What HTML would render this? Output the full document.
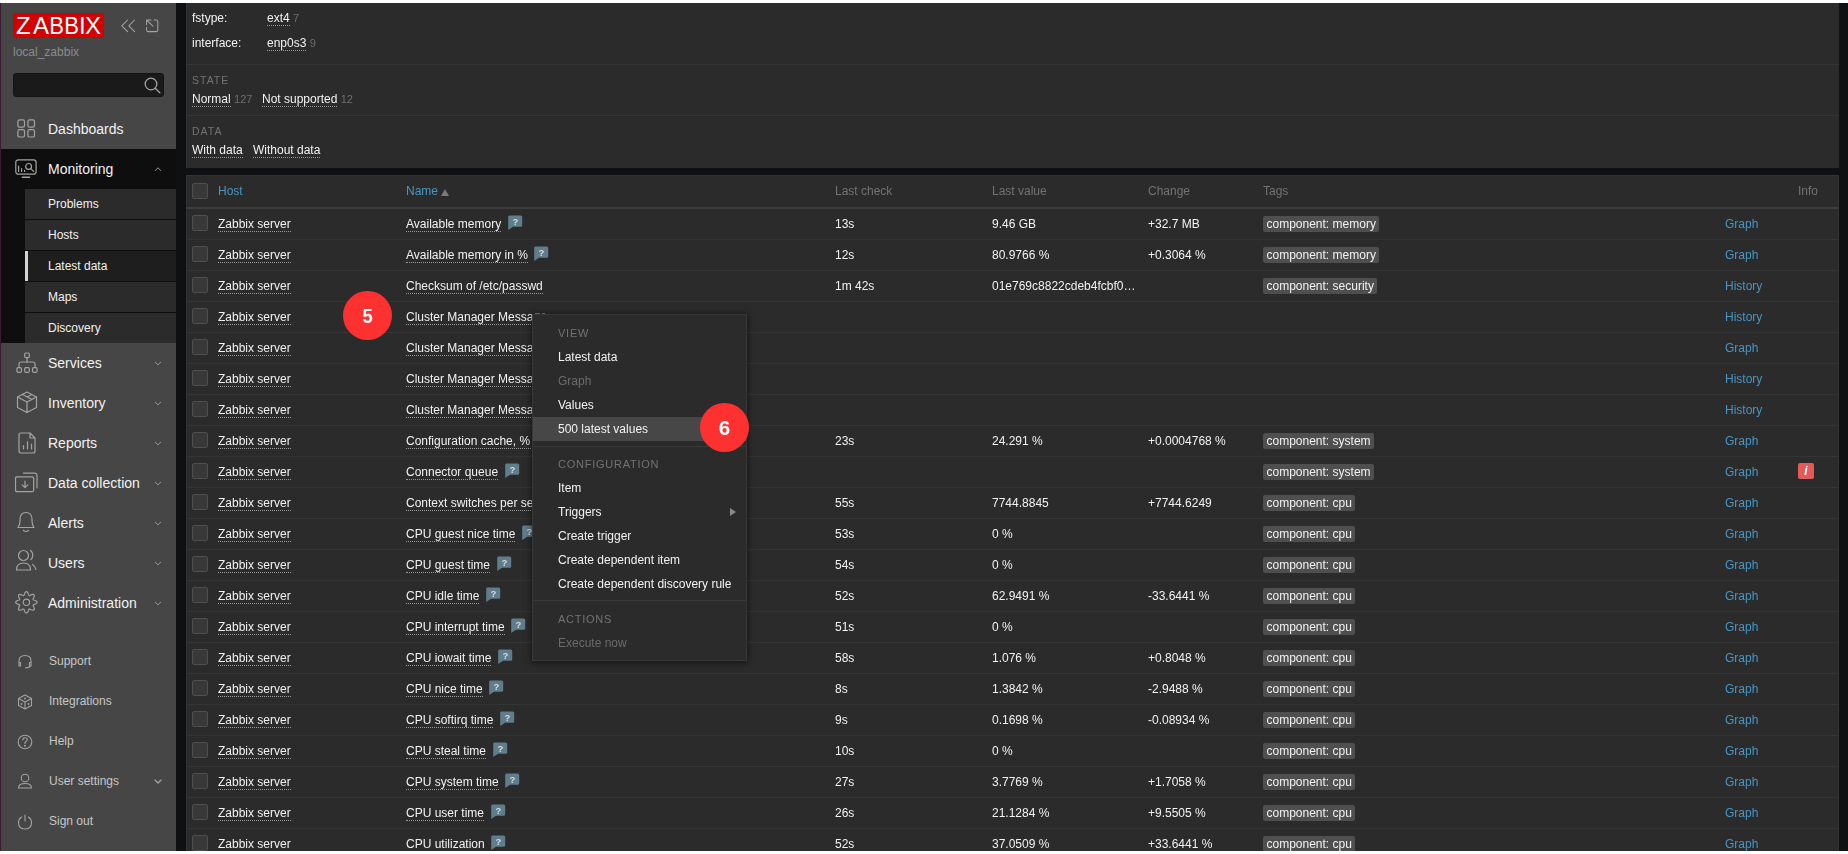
<!DOCTYPE html><html><head><meta charset="utf-8"><title>Latest data</title><style>
*{box-sizing:border-box;margin:0;padding:0}
html,body{width:1848px;height:854px;overflow:hidden;background:#fff}
body{font-family:"Liberation Sans",sans-serif;font-size:12px;color:#f2f2f2;position:relative}
#page{position:absolute;left:0;top:0;width:1848px;height:854px;background:#0e1012;overflow:hidden}
.abs{position:absolute;white-space:nowrap}
#content{position:absolute;left:0;top:0;width:1848px;height:854px;will-change:transform}
.bx{position:absolute}
.t{position:absolute;white-space:nowrap;line-height:14px}
.lnk{border-bottom:1px dotted #9a9a9a}
.cnt{color:#6e6e6e;font-size:11px}
.blue{color:#4796c4}
.hd{color:#737373}
.ttl{color:#737373;font-size:10.5px;letter-spacing:1px}
.cb{position:absolute;width:16px;height:16px;background:#383838;border:1px solid #4f4f4f;border-radius:2px}
.tag{position:absolute;height:16px;line-height:17px;padding:0 3.5px;background:#4f4f4f;border-radius:2px;color:#f2f2f2;white-space:nowrap}
.help{position:absolute;width:14px;height:15px}
.mi{position:absolute;left:1px;width:175px;height:40px}
.mt{position:absolute;left:48px;font-size:14px;line-height:16px;color:#f2f2f2;white-space:nowrap}
.sub{position:absolute;left:25px;width:151px;height:30px;background:#2b2b2b}
.st{position:absolute;left:48px;white-space:nowrap;line-height:14px;color:#f2f2f2}
.bt{position:absolute;left:49px;white-space:nowrap;line-height:14px;color:#c6c6c6}
.chev{position:absolute;left:153px}
.menu{position:absolute;left:532px;top:314px;width:215px;height:347px;background:#2b2b2b;border:1px solid #383838;box-shadow:0 1px 6px 1px rgba(0,0,0,.5);z-index:5}
.mh{position:absolute;left:25px;font-size:11px;letter-spacing:0.75px;color:#737373;white-space:nowrap;line-height:14px}
.mit{position:absolute;left:25px;white-space:nowrap;line-height:14px;color:#f2f2f2}
.dis{color:#6b6b6b}
.circ{position:absolute;width:49px;height:49px;border-radius:50%;background:#fe3131;color:#fff;font-weight:bold;font-size:20.5px;text-align:center;line-height:49px;z-index:6}.circ span{display:inline-block;transform:scaleX(0.9)}
</style></head><body><div id="page">
<div class="bx" style="left:0;top:0;width:1px;height:854px;background:#3b1a33"></div>
<div class="bx" style="left:1px;top:0;width:175px;height:854px;background:#464646"></div>
<div class="bx" style="left:13px;top:13px;width:91px;height:25px;background:#d40000"></div>
<div class="abs" style="left:16px;top:12px;font-size:24px;line-height:27px;color:#fff;">Z</div>
<div class="abs" style="left:33px;top:12px;font-size:24px;line-height:27px;color:#fff;">A</div>
<div class="abs" style="left:49px;top:12px;font-size:24px;line-height:27px;color:#fff;transform:scaleX(0.92);transform-origin:2px 0;">B</div>
<div class="abs" style="left:64px;top:12px;font-size:24px;line-height:27px;color:#fff;transform:scaleX(0.92);transform-origin:2px 0;">B</div>
<div class="abs" style="left:79px;top:12px;font-size:24px;line-height:27px;color:#fff;">I</div>
<div class="abs" style="left:85px;top:12px;font-size:24px;line-height:27px;color:#fff;">X</div>
<svg class="abs" style="left:120px;top:18px" width="16" height="16" viewBox="0 0 16 16" fill="none" stroke="#a3a3a3" stroke-width="1.05" stroke-linecap="round" stroke-linejoin="round"><path d="M7.6 2 L1.8 7.8 L7.6 13.6 M14.6 2 L8.8 7.8 L14.6 13.6"/></svg>
<svg class="abs" style="left:145px;top:18px" width="15" height="16" viewBox="0 0 15 16" fill="none" stroke="#a3a3a3" stroke-width="1.05" stroke-linecap="round" stroke-linejoin="round"><path d="M1.6 6.6 V1.9 H6.1 M9.2 1.9 H11.3 Q12.8 1.9 12.8 3.4 V12.1 Q12.8 13.6 11.3 13.6 H3.1 Q1.6 13.6 1.6 12.1 V9.4 M2.3 2.6 L7.9 8.2"/></svg>
<div class="abs" style="left:13px;top:45px;line-height:14px;color:#8c8c8c">local_zabbix</div>
<div class="bx" style="left:13px;top:73px;width:151px;height:24px;background:#1a1a1a;border:1px solid #141414;border-radius:3px"></div>
<svg class="abs" style="left:144px;top:77px" width="17" height="17" viewBox="0 0 17 17" fill="none" stroke="#a3a3a3" stroke-width="1.3" stroke-linecap="round" stroke-linejoin="round"><circle cx="7" cy="7" r="5.8"/><path d="M11.2 11.2 L15.8 15.8"/></svg>
<div class="mt" style="top:121px">Dashboards</div>
<svg class="abs" style="left:17px;top:119px" width="19" height="19" viewBox="0 0 19 19" fill="none" stroke="#a3a3a3" stroke-width="1.2" stroke-linecap="round" stroke-linejoin="round"><rect x="0.9" y="0.9" width="6.6" height="7.3" rx="1.6"/><rect x="10.9" y="0.9" width="6.6" height="7.3" rx="1.6"/><rect x="0.9" y="10.7" width="6.6" height="7.3" rx="1.6"/><rect x="10.9" y="10.7" width="6.6" height="7.3" rx="1.6"/></svg>
<div class="bx" style="left:1px;top:149px;width:175px;height:194px;background:#0e0e0e"></div>
<div class="mt" style="top:161px">Monitoring</div>
<svg class="abs" style="left:15px;top:159px" width="23" height="20" viewBox="0 0 23 20" fill="none" stroke="#a3a3a3" stroke-width="1.2" stroke-linecap="round" stroke-linejoin="round"><rect x="0.8" y="0.8" width="20.3" height="14.4" rx="2.5"/><path d="M7.3 18.2 H14.6" stroke-width="1.5"/><path d="M3.6 12.4 V7 M6.6 12.4 V9.6 M9.6 12.4 V11.4"/><circle cx="13.6" cy="7.4" r="2.9"/><path d="M15.8 9.6 L18.6 12.4"/></svg>
<svg class="abs" style="left:154px;top:166px" width="8" height="6" viewBox="0 0 8 6" fill="none" stroke="#a3a3a3" stroke-width="0.9" stroke-linecap="round" stroke-linejoin="round"><path d="M1.3 4.6 L4 1.8 L6.7 4.6"/></svg>
<div class="sub" style="top:189px;background:#2b2b2b"></div>
<div class="st" style="top:197px">Problems</div>
<div class="sub" style="top:220px;background:#2b2b2b"></div>
<div class="st" style="top:228px">Hosts</div>
<div class="sub" style="top:251px;background:#1e1e1e"></div>
<div class="st" style="top:259px">Latest data</div>
<div class="sub" style="top:282px;background:#2b2b2b"></div>
<div class="st" style="top:290px">Maps</div>
<div class="sub" style="top:313px;background:#2b2b2b"></div>
<div class="st" style="top:321px">Discovery</div>
<div class="bx" style="left:25px;top:251px;width:3px;height:30px;background:#d4d4d4"></div>
<div class="mt" style="top:355px">Services</div>
<svg class="abs" style="left:154px;top:361px" width="8" height="5" viewBox="0 0 8 5" fill="none" stroke="#a3a3a3" stroke-width="0.9" stroke-linecap="round" stroke-linejoin="round"><path d="M1.3 1.2 L4 3.8 L6.7 1.2"/></svg>
<svg class="abs" style="left:16px;top:352px" width="22" height="22" viewBox="0 0 22 22" fill="none" stroke="#a3a3a3" stroke-width="1.2" stroke-linecap="round" stroke-linejoin="round"><rect x="8.7" y="1" width="4.6" height="4.6" rx="1.2"/><path d="M11 5.6 V10.5 M3 14.5 V12 Q3 10 5 10 H17 Q19 10 19 12 V14.5"/><rect x="0.9" y="15.7" width="4.6" height="4.6" rx="1.2"/><rect x="8.7" y="15.7" width="4.6" height="4.6" rx="1.2"/><rect x="16.5" y="15.7" width="4.6" height="4.6" rx="1.2"/></svg>
<div class="mt" style="top:395px">Inventory</div>
<svg class="abs" style="left:154px;top:401px" width="8" height="5" viewBox="0 0 8 5" fill="none" stroke="#a3a3a3" stroke-width="0.9" stroke-linecap="round" stroke-linejoin="round"><path d="M1.3 1.2 L4 3.8 L6.7 1.2"/></svg>
<svg class="abs" style="left:16px;top:391px" width="22" height="23" viewBox="0 0 22 23" fill="none" stroke="#a3a3a3" stroke-width="1.2" stroke-linecap="round" stroke-linejoin="round"><path d="M11 1 L20.5 6 V16.5 L11 21.5 L1.5 16.5 V6 Z M1.5 6 L11 11 L20.5 6 M11 11 V21.5 M6.5 3.5 L16 8.5 M16 3.5 L11 6"/></svg>
<div class="mt" style="top:435px">Reports</div>
<svg class="abs" style="left:154px;top:441px" width="8" height="5" viewBox="0 0 8 5" fill="none" stroke="#a3a3a3" stroke-width="0.9" stroke-linecap="round" stroke-linejoin="round"><path d="M1.3 1.2 L4 3.8 L6.7 1.2"/></svg>
<svg class="abs" style="left:18px;top:432px" width="19" height="23" viewBox="0 0 19 23" fill="none" stroke="#a3a3a3" stroke-width="1.2" stroke-linecap="round" stroke-linejoin="round"><path d="M3 1 H12 L17 6 V19 Q17 21 15 21 H3 Q1 21 1 19 V3 Q1 1 3 1 Z M12 1 V6 H17"/><path d="M5.5 17 V13.5 M9.5 17 V9.5 M13.5 17 V12"/></svg>
<div class="mt" style="top:475px">Data collection</div>
<svg class="abs" style="left:154px;top:481px" width="8" height="5" viewBox="0 0 8 5" fill="none" stroke="#a3a3a3" stroke-width="0.9" stroke-linecap="round" stroke-linejoin="round"><path d="M1.3 1.2 L4 3.8 L6.7 1.2"/></svg>
<svg class="abs" style="left:15px;top:472px" width="23" height="21" viewBox="0 0 23 21" fill="none" stroke="#a3a3a3" stroke-width="1.2" stroke-linecap="round" stroke-linejoin="round"><rect x="0.5" y="4.8" width="18.2" height="14.8" rx="1.5"/><path d="M8.5 1.2 H19.3 Q22 1 22 3.5 V16"/><path d="M10 9 V15.5 M7.2 12.8 L10 15.6 L12.8 12.8"/></svg>
<div class="mt" style="top:515px">Alerts</div>
<svg class="abs" style="left:154px;top:521px" width="8" height="5" viewBox="0 0 8 5" fill="none" stroke="#a3a3a3" stroke-width="0.9" stroke-linecap="round" stroke-linejoin="round"><path d="M1.3 1.2 L4 3.8 L6.7 1.2"/></svg>
<svg class="abs" style="left:16px;top:511px" width="20" height="23" viewBox="0 0 20 23" fill="none" stroke="#a3a3a3" stroke-width="1.2" stroke-linecap="round" stroke-linejoin="round"><path d="M2 16.5 Q4 14 4 10 V8.5 Q4 1.5 10 1.5 Q16 1.5 16 8.5 V10 Q16 14 18 16.5 Z M7.5 19.5 Q10 21.5 12.5 19.5"/></svg>
<div class="mt" style="top:555px">Users</div>
<svg class="abs" style="left:154px;top:561px" width="8" height="5" viewBox="0 0 8 5" fill="none" stroke="#a3a3a3" stroke-width="0.9" stroke-linecap="round" stroke-linejoin="round"><path d="M1.3 1.2 L4 3.8 L6.7 1.2"/></svg>
<svg class="abs" style="left:15px;top:549px" width="23" height="24" viewBox="0 0 23 24" fill="none" stroke="#a3a3a3" stroke-width="1.2" stroke-linecap="round" stroke-linejoin="round"><circle cx="8.5" cy="6.5" r="5"/><path d="M1.5 21 Q1.5 14 8.5 14 Q15.5 14 15.5 21 Z M15.5 1.5 Q18.5 4 17.5 8 Q17 9.5 16 10.5 M17.5 15.5 Q20.5 17.5 21 20.5"/></svg>
<div class="mt" style="top:595px">Administration</div>
<svg class="abs" style="left:154px;top:601px" width="8" height="5" viewBox="0 0 8 5" fill="none" stroke="#a3a3a3" stroke-width="0.9" stroke-linecap="round" stroke-linejoin="round"><path d="M1.3 1.2 L4 3.8 L6.7 1.2"/></svg>
<svg class="abs" style="left:15px;top:591px" width="23" height="23" viewBox="0 0 23 23" fill="none" stroke="#a3a3a3" stroke-width="1.2" stroke-linecap="round" stroke-linejoin="round"><circle cx="11.4" cy="11.3" r="3.2"/><path d="M11.40 0.60 L11.95 0.76 L12.46 1.22 L12.89 1.89 L13.23 2.67 L13.51 3.43 L13.76 4.05 L14.03 4.45 L14.38 4.60 L14.86 4.51 L15.47 4.24 L16.20 3.90 L17.00 3.59 L17.78 3.42 L18.46 3.46 L18.97 3.73 L19.24 4.24 L19.28 4.92 L19.11 5.70 L18.80 6.50 L18.46 7.22 L18.19 7.84 L18.10 8.32 L18.25 8.67 L18.65 8.94 L19.27 9.19 L20.03 9.47 L20.81 9.81 L21.48 10.24 L21.94 10.75 L22.10 11.30 L21.94 11.85 L21.48 12.36 L20.81 12.79 L20.03 13.13 L19.27 13.41 L18.65 13.66 L18.25 13.93 L18.10 14.28 L18.19 14.76 L18.46 15.37 L18.80 16.10 L19.11 16.90 L19.28 17.68 L19.24 18.36 L18.97 18.87 L18.46 19.14 L17.78 19.18 L17.00 19.01 L16.20 18.70 L15.47 18.36 L14.86 18.09 L14.38 18.00 L14.03 18.15 L13.76 18.55 L13.51 19.17 L13.23 19.93 L12.89 20.71 L12.46 21.38 L11.95 21.84 L11.40 22.00 L10.85 21.84 L10.34 21.38 L9.91 20.71 L9.57 19.93 L9.29 19.17 L9.04 18.55 L8.77 18.15 L8.42 18.00 L7.94 18.09 L7.33 18.36 L6.60 18.70 L5.80 19.01 L5.02 19.18 L4.34 19.14 L3.83 18.87 L3.56 18.36 L3.52 17.68 L3.69 16.90 L4.00 16.10 L4.34 15.38 L4.61 14.76 L4.70 14.28 L4.55 13.93 L4.15 13.66 L3.53 13.41 L2.77 13.13 L1.99 12.79 L1.32 12.36 L0.86 11.85 L0.70 11.30 L0.86 10.75 L1.32 10.24 L1.99 9.81 L2.77 9.47 L3.53 9.19 L4.15 8.94 L4.55 8.67 L4.70 8.32 L4.61 7.84 L4.34 7.22 L4.00 6.50 L3.69 5.70 L3.52 4.92 L3.56 4.24 L3.83 3.73 L4.34 3.46 L5.02 3.42 L5.80 3.59 L6.60 3.90 L7.33 4.24 L7.94 4.51 L8.42 4.60 L8.77 4.45 L9.04 4.05 L9.29 3.43 L9.57 2.67 L9.91 1.89 L10.34 1.22 L10.85 0.76 Z"/></svg>
<div class="bt" style="top:654px">Support</div>
<svg class="abs" style="left:17px;top:654px" width="16" height="15" viewBox="0 0 16 15" fill="none" stroke="#a3a3a3" stroke-width="1.1" stroke-linecap="round" stroke-linejoin="round"><path d="M2 10 V7 Q2 1.5 8 1.5 Q14 1.5 14 7 V10 M2 8.5 H3.5 V12 H2 Z M14 8.5 H12.5 V12 H14 Z M13.5 12 Q13 13.5 8.5 13.8"/></svg>
<div class="bt" style="top:694px">Integrations</div>
<svg class="abs" style="left:17px;top:694px" width="16" height="16" viewBox="0 0 16 16" fill="none" stroke="#a3a3a3" stroke-width="1.1" stroke-linecap="round" stroke-linejoin="round"><path d="M8 1 L14.5 4.5 V11.5 L8 15 L1.5 11.5 V4.5 Z M1.5 4.5 L8 8 L14.5 4.5 M8 8 V15"/><circle cx="8" cy="4.5" r=".4"/><circle cx="4.5" cy="10" r=".4"/><circle cx="11.5" cy="10" r=".4"/></svg>
<div class="bt" style="top:734px">Help</div>
<svg class="abs" style="left:17px;top:734px" width="16" height="16" viewBox="0 0 16 16" fill="none" stroke="#a3a3a3" stroke-width="1.1" stroke-linecap="round" stroke-linejoin="round"><circle cx="8" cy="8" r="6.8"/><path d="M5.8 6 Q5.8 3.8 8 3.8 Q10.2 3.8 10.2 5.8 Q10.2 7.2 8 8.3 V9.5"/><circle cx="8" cy="11.8" r=".5"/></svg>
<div class="bt" style="top:774px">User settings</div>
<svg class="abs" style="left:17px;top:773px" width="16" height="16" viewBox="0 0 16 16" fill="none" stroke="#a3a3a3" stroke-width="1.1" stroke-linecap="round" stroke-linejoin="round"><circle cx="8" cy="5" r="3.8"/><path d="M1.5 15 Q1.5 10.5 8 10.5 Q14.5 10.5 14.5 15 Z"/></svg>
<div class="bt" style="top:814px">Sign out</div>
<svg class="abs" style="left:17px;top:814px" width="16" height="16" viewBox="0 0 16 16" fill="none" stroke="#a3a3a3" stroke-width="1.1" stroke-linecap="round" stroke-linejoin="round"><path d="M8 1 V7 M4.5 3 Q1.5 5 1.5 8.5 Q1.5 15 8 15 Q14.5 15 14.5 8.5 Q14.5 5 11.5 3"/></svg>
<svg class="abs" style="left:154px;top:779px" width="8" height="5" viewBox="0 0 8 5" fill="none" stroke="#a3a3a3" stroke-width="1.3" stroke-linecap="round" stroke-linejoin="round"><path d="M1 1 L4 4 L7 1"/></svg>
<div id="content">
<div class="bx" style="left:186px;top:0;width:1653px;height:168px;background:#2b2b2b;border-left:1px solid #333"></div>
<div class="bx" style="left:186px;top:64px;width:1653px;height:1px;background:#353535"></div>
<div class="bx" style="left:186px;top:115px;width:1653px;height:1px;background:#353535"></div>
<div class="t" style="left:192px;top:11px">fstype:</div>
<div class="t" style="left:267px;top:11px"><span class="lnk">ext4</span> <span class="cnt">7</span></div>
<div class="t" style="left:192px;top:36px">interface:</div>
<div class="t" style="left:267px;top:36px"><span class="lnk">enp0s3</span> <span class="cnt">9</span></div>
<div class="t ttl" style="left:192px;top:73px">STATE</div>
<div class="t" style="left:192px;top:92px"><span class="lnk">Normal</span> <span class="cnt">127</span></div>
<div class="t" style="left:262px;top:92px"><span class="lnk">Not supported</span> <span class="cnt">12</span></div>
<div class="t ttl" style="left:192px;top:124px">DATA</div>
<div class="t" style="left:192px;top:143px"><span class="lnk">With data</span></div>
<div class="t" style="left:253px;top:143px"><span class="lnk">Without data</span></div>
<div class="bx" style="left:186px;top:175px;width:1653px;height:700px;background:#2b2b2b;border:1px solid #333"></div>
<div class="bx" style="left:187px;top:207px;width:1651px;height:2px;background:#3c3c3c"></div>
<div class="cb" style="left:192px;top:183px"></div>
<div class="t blue" style="left:218px;top:184px">Host</div>
<div class="t blue" style="left:406px;top:184px">Name</div>
<div class="bx" style="left:441px;top:189px;width:0;height:0;border-left:4px solid transparent;border-right:4px solid transparent;border-bottom:7px solid #7a7a7a"></div>
<div class="t hd" style="left:835px;top:184px">Last check</div>
<div class="t hd" style="left:992px;top:184px">Last value</div>
<div class="t hd" style="left:1148px;top:184px">Change</div>
<div class="t hd" style="left:1263px;top:184px">Tags</div>
<div class="t hd" style="left:1798px;top:184px">Info</div>
<div class="bx" style="left:187px;top:239px;width:1651px;height:1px;background:#343434"></div>
<div class="cb" style="left:192px;top:215px"></div>
<div class="t" style="left:218px;top:217px"><span class="lnk">Zabbix server</span></div>
<div class="t" style="left:406px;top:217px"><span class="lnk">Available memory</span></div>
<div class="t" style="left:835px;top:217px">13s</div>
<div class="t" style="left:992px;top:217px">9.46 GB</div>
<div class="t" style="left:1148px;top:217px">+32.7 MB</div>
<div class="tag" style="left:1263px;top:215.5px">component: memory</div>
<div class="t blue" style="left:1725px;top:217px">Graph</div>
<svg class="abs" style="left:508px;top:215px" width="15" height="15" viewBox="0 0 15 15"><path d="M1.2 0.6 H12.7 Q14.2 0.6 14.2 2.1 V10.4 Q14.2 11.8 12.7 11.8 H5 L0.2 14.9 V2.1 Q0.2 0.6 1.2 0.6 Z" fill="#607d8b"/><text x="7.3" y="9.6" font-size="9.5" font-weight="bold" fill="#d5dde1" text-anchor="middle" font-family="Liberation Sans">?</text></svg>
<div class="bx" style="left:187px;top:270px;width:1651px;height:1px;background:#343434"></div>
<div class="cb" style="left:192px;top:246px"></div>
<div class="t" style="left:218px;top:248px"><span class="lnk">Zabbix server</span></div>
<div class="t" style="left:406px;top:248px"><span class="lnk">Available memory in %</span></div>
<div class="t" style="left:835px;top:248px">12s</div>
<div class="t" style="left:992px;top:248px">80.9766 %</div>
<div class="t" style="left:1148px;top:248px">+0.3064 %</div>
<div class="tag" style="left:1263px;top:246.5px">component: memory</div>
<div class="t blue" style="left:1725px;top:248px">Graph</div>
<svg class="abs" style="left:534px;top:246px" width="15" height="15" viewBox="0 0 15 15"><path d="M1.2 0.6 H12.7 Q14.2 0.6 14.2 2.1 V10.4 Q14.2 11.8 12.7 11.8 H5 L0.2 14.9 V2.1 Q0.2 0.6 1.2 0.6 Z" fill="#607d8b"/><text x="7.3" y="9.6" font-size="9.5" font-weight="bold" fill="#d5dde1" text-anchor="middle" font-family="Liberation Sans">?</text></svg>
<div class="bx" style="left:187px;top:301px;width:1651px;height:1px;background:#343434"></div>
<div class="cb" style="left:192px;top:277px"></div>
<div class="t" style="left:218px;top:279px"><span class="lnk">Zabbix server</span></div>
<div class="t" style="left:406px;top:279px"><span class="lnk">Checksum of /etc/passwd</span></div>
<div class="t" style="left:835px;top:279px">1m 42s</div>
<div class="t" style="left:992px;top:279px">01e769c8822cdeb4fcbf0&hellip;</div>
<div class="tag" style="left:1263px;top:277.5px">component: security</div>
<div class="t blue" style="left:1725px;top:279px">History</div>
<div class="bx" style="left:187px;top:332px;width:1651px;height:1px;background:#343434"></div>
<div class="cb" style="left:192px;top:308px"></div>
<div class="t" style="left:218px;top:310px"><span class="lnk">Zabbix server</span></div>
<div class="t" style="left:406px;top:310px"><span class="lnk">Cluster Manager Messages</span></div>
<div class="t blue" style="left:1725px;top:310px">History</div>
<div class="bx" style="left:187px;top:363px;width:1651px;height:1px;background:#343434"></div>
<div class="cb" style="left:192px;top:339px"></div>
<div class="t" style="left:218px;top:341px"><span class="lnk">Zabbix server</span></div>
<div class="t" style="left:406px;top:341px"><span class="lnk">Cluster Manager Messages</span></div>
<div class="t blue" style="left:1725px;top:341px">Graph</div>
<div class="bx" style="left:187px;top:394px;width:1651px;height:1px;background:#343434"></div>
<div class="cb" style="left:192px;top:370px"></div>
<div class="t" style="left:218px;top:372px"><span class="lnk">Zabbix server</span></div>
<div class="t" style="left:406px;top:372px"><span class="lnk">Cluster Manager Messages</span></div>
<div class="t blue" style="left:1725px;top:372px">History</div>
<div class="bx" style="left:187px;top:425px;width:1651px;height:1px;background:#343434"></div>
<div class="cb" style="left:192px;top:401px"></div>
<div class="t" style="left:218px;top:403px"><span class="lnk">Zabbix server</span></div>
<div class="t" style="left:406px;top:403px"><span class="lnk">Cluster Manager Messages</span></div>
<div class="t blue" style="left:1725px;top:403px">History</div>
<div class="bx" style="left:187px;top:456px;width:1651px;height:1px;background:#343434"></div>
<div class="cb" style="left:192px;top:432px"></div>
<div class="t" style="left:218px;top:434px"><span class="lnk">Zabbix server</span></div>
<div class="t" style="left:406px;top:434px"><span class="lnk">Configuration cache, % used</span></div>
<div class="t" style="left:835px;top:434px">23s</div>
<div class="t" style="left:992px;top:434px">24.291 %</div>
<div class="t" style="left:1148px;top:434px">+0.0004768 %</div>
<div class="tag" style="left:1263px;top:432.5px">component: system</div>
<div class="t blue" style="left:1725px;top:434px">Graph</div>
<div class="bx" style="left:187px;top:487px;width:1651px;height:1px;background:#343434"></div>
<div class="cb" style="left:192px;top:463px"></div>
<div class="t" style="left:218px;top:465px"><span class="lnk">Zabbix server</span></div>
<div class="t" style="left:406px;top:465px"><span class="lnk">Connector queue</span></div>
<div class="tag" style="left:1263px;top:463.5px">component: system</div>
<div class="t blue" style="left:1725px;top:465px">Graph</div>
<svg class="abs" style="left:505px;top:463px" width="15" height="15" viewBox="0 0 15 15"><path d="M1.2 0.6 H12.7 Q14.2 0.6 14.2 2.1 V10.4 Q14.2 11.8 12.7 11.8 H5 L0.2 14.9 V2.1 Q0.2 0.6 1.2 0.6 Z" fill="#607d8b"/><text x="7.3" y="9.6" font-size="9.5" font-weight="bold" fill="#d5dde1" text-anchor="middle" font-family="Liberation Sans">?</text></svg>
<div class="bx" style="left:1798px;top:502px"></div>
<div class="bx" style="left:187px;top:518px;width:1651px;height:1px;background:#343434"></div>
<div class="cb" style="left:192px;top:494px"></div>
<div class="t" style="left:218px;top:496px"><span class="lnk">Zabbix server</span></div>
<div class="t" style="left:406px;top:496px"><span class="lnk">Context switches per second</span></div>
<div class="t" style="left:835px;top:496px">55s</div>
<div class="t" style="left:992px;top:496px">7744.8845</div>
<div class="t" style="left:1148px;top:496px">+7744.6249</div>
<div class="tag" style="left:1263px;top:494.5px">component: cpu</div>
<div class="t blue" style="left:1725px;top:496px">Graph</div>
<div class="bx" style="left:187px;top:549px;width:1651px;height:1px;background:#343434"></div>
<div class="cb" style="left:192px;top:525px"></div>
<div class="t" style="left:218px;top:527px"><span class="lnk">Zabbix server</span></div>
<div class="t" style="left:406px;top:527px"><span class="lnk">CPU guest nice time</span></div>
<div class="t" style="left:835px;top:527px">53s</div>
<div class="t" style="left:992px;top:527px">0 %</div>
<div class="tag" style="left:1263px;top:525.5px">component: cpu</div>
<div class="t blue" style="left:1725px;top:527px">Graph</div>
<svg class="abs" style="left:522px;top:525px" width="15" height="15" viewBox="0 0 15 15"><path d="M1.2 0.6 H12.7 Q14.2 0.6 14.2 2.1 V10.4 Q14.2 11.8 12.7 11.8 H5 L0.2 14.9 V2.1 Q0.2 0.6 1.2 0.6 Z" fill="#607d8b"/><text x="7.3" y="9.6" font-size="9.5" font-weight="bold" fill="#d5dde1" text-anchor="middle" font-family="Liberation Sans">?</text></svg>
<div class="bx" style="left:187px;top:580px;width:1651px;height:1px;background:#343434"></div>
<div class="cb" style="left:192px;top:556px"></div>
<div class="t" style="left:218px;top:558px"><span class="lnk">Zabbix server</span></div>
<div class="t" style="left:406px;top:558px"><span class="lnk">CPU guest time</span></div>
<div class="t" style="left:835px;top:558px">54s</div>
<div class="t" style="left:992px;top:558px">0 %</div>
<div class="tag" style="left:1263px;top:556.5px">component: cpu</div>
<div class="t blue" style="left:1725px;top:558px">Graph</div>
<svg class="abs" style="left:497px;top:556px" width="15" height="15" viewBox="0 0 15 15"><path d="M1.2 0.6 H12.7 Q14.2 0.6 14.2 2.1 V10.4 Q14.2 11.8 12.7 11.8 H5 L0.2 14.9 V2.1 Q0.2 0.6 1.2 0.6 Z" fill="#607d8b"/><text x="7.3" y="9.6" font-size="9.5" font-weight="bold" fill="#d5dde1" text-anchor="middle" font-family="Liberation Sans">?</text></svg>
<div class="bx" style="left:187px;top:611px;width:1651px;height:1px;background:#343434"></div>
<div class="cb" style="left:192px;top:587px"></div>
<div class="t" style="left:218px;top:589px"><span class="lnk">Zabbix server</span></div>
<div class="t" style="left:406px;top:589px"><span class="lnk">CPU idle time</span></div>
<div class="t" style="left:835px;top:589px">52s</div>
<div class="t" style="left:992px;top:589px">62.9491 %</div>
<div class="t" style="left:1148px;top:589px">-33.6441 %</div>
<div class="tag" style="left:1263px;top:587.5px">component: cpu</div>
<div class="t blue" style="left:1725px;top:589px">Graph</div>
<svg class="abs" style="left:486px;top:587px" width="15" height="15" viewBox="0 0 15 15"><path d="M1.2 0.6 H12.7 Q14.2 0.6 14.2 2.1 V10.4 Q14.2 11.8 12.7 11.8 H5 L0.2 14.9 V2.1 Q0.2 0.6 1.2 0.6 Z" fill="#607d8b"/><text x="7.3" y="9.6" font-size="9.5" font-weight="bold" fill="#d5dde1" text-anchor="middle" font-family="Liberation Sans">?</text></svg>
<div class="bx" style="left:187px;top:642px;width:1651px;height:1px;background:#343434"></div>
<div class="cb" style="left:192px;top:618px"></div>
<div class="t" style="left:218px;top:620px"><span class="lnk">Zabbix server</span></div>
<div class="t" style="left:406px;top:620px"><span class="lnk">CPU interrupt time</span></div>
<div class="t" style="left:835px;top:620px">51s</div>
<div class="t" style="left:992px;top:620px">0 %</div>
<div class="tag" style="left:1263px;top:618.5px">component: cpu</div>
<div class="t blue" style="left:1725px;top:620px">Graph</div>
<svg class="abs" style="left:511px;top:618px" width="15" height="15" viewBox="0 0 15 15"><path d="M1.2 0.6 H12.7 Q14.2 0.6 14.2 2.1 V10.4 Q14.2 11.8 12.7 11.8 H5 L0.2 14.9 V2.1 Q0.2 0.6 1.2 0.6 Z" fill="#607d8b"/><text x="7.3" y="9.6" font-size="9.5" font-weight="bold" fill="#d5dde1" text-anchor="middle" font-family="Liberation Sans">?</text></svg>
<div class="bx" style="left:187px;top:673px;width:1651px;height:1px;background:#343434"></div>
<div class="cb" style="left:192px;top:649px"></div>
<div class="t" style="left:218px;top:651px"><span class="lnk">Zabbix server</span></div>
<div class="t" style="left:406px;top:651px"><span class="lnk">CPU iowait time</span></div>
<div class="t" style="left:835px;top:651px">58s</div>
<div class="t" style="left:992px;top:651px">1.076 %</div>
<div class="t" style="left:1148px;top:651px">+0.8048 %</div>
<div class="tag" style="left:1263px;top:649.5px">component: cpu</div>
<div class="t blue" style="left:1725px;top:651px">Graph</div>
<svg class="abs" style="left:498px;top:649px" width="15" height="15" viewBox="0 0 15 15"><path d="M1.2 0.6 H12.7 Q14.2 0.6 14.2 2.1 V10.4 Q14.2 11.8 12.7 11.8 H5 L0.2 14.9 V2.1 Q0.2 0.6 1.2 0.6 Z" fill="#607d8b"/><text x="7.3" y="9.6" font-size="9.5" font-weight="bold" fill="#d5dde1" text-anchor="middle" font-family="Liberation Sans">?</text></svg>
<div class="bx" style="left:187px;top:704px;width:1651px;height:1px;background:#343434"></div>
<div class="cb" style="left:192px;top:680px"></div>
<div class="t" style="left:218px;top:682px"><span class="lnk">Zabbix server</span></div>
<div class="t" style="left:406px;top:682px"><span class="lnk">CPU nice time</span></div>
<div class="t" style="left:835px;top:682px">8s</div>
<div class="t" style="left:992px;top:682px">1.3842 %</div>
<div class="t" style="left:1148px;top:682px">-2.9488 %</div>
<div class="tag" style="left:1263px;top:680.5px">component: cpu</div>
<div class="t blue" style="left:1725px;top:682px">Graph</div>
<svg class="abs" style="left:489px;top:680px" width="15" height="15" viewBox="0 0 15 15"><path d="M1.2 0.6 H12.7 Q14.2 0.6 14.2 2.1 V10.4 Q14.2 11.8 12.7 11.8 H5 L0.2 14.9 V2.1 Q0.2 0.6 1.2 0.6 Z" fill="#607d8b"/><text x="7.3" y="9.6" font-size="9.5" font-weight="bold" fill="#d5dde1" text-anchor="middle" font-family="Liberation Sans">?</text></svg>
<div class="bx" style="left:187px;top:735px;width:1651px;height:1px;background:#343434"></div>
<div class="cb" style="left:192px;top:711px"></div>
<div class="t" style="left:218px;top:713px"><span class="lnk">Zabbix server</span></div>
<div class="t" style="left:406px;top:713px"><span class="lnk">CPU softirq time</span></div>
<div class="t" style="left:835px;top:713px">9s</div>
<div class="t" style="left:992px;top:713px">0.1698 %</div>
<div class="t" style="left:1148px;top:713px">-0.08934 %</div>
<div class="tag" style="left:1263px;top:711.5px">component: cpu</div>
<div class="t blue" style="left:1725px;top:713px">Graph</div>
<svg class="abs" style="left:500px;top:711px" width="15" height="15" viewBox="0 0 15 15"><path d="M1.2 0.6 H12.7 Q14.2 0.6 14.2 2.1 V10.4 Q14.2 11.8 12.7 11.8 H5 L0.2 14.9 V2.1 Q0.2 0.6 1.2 0.6 Z" fill="#607d8b"/><text x="7.3" y="9.6" font-size="9.5" font-weight="bold" fill="#d5dde1" text-anchor="middle" font-family="Liberation Sans">?</text></svg>
<div class="bx" style="left:187px;top:766px;width:1651px;height:1px;background:#343434"></div>
<div class="cb" style="left:192px;top:742px"></div>
<div class="t" style="left:218px;top:744px"><span class="lnk">Zabbix server</span></div>
<div class="t" style="left:406px;top:744px"><span class="lnk">CPU steal time</span></div>
<div class="t" style="left:835px;top:744px">10s</div>
<div class="t" style="left:992px;top:744px">0 %</div>
<div class="tag" style="left:1263px;top:742.5px">component: cpu</div>
<div class="t blue" style="left:1725px;top:744px">Graph</div>
<svg class="abs" style="left:493px;top:742px" width="15" height="15" viewBox="0 0 15 15"><path d="M1.2 0.6 H12.7 Q14.2 0.6 14.2 2.1 V10.4 Q14.2 11.8 12.7 11.8 H5 L0.2 14.9 V2.1 Q0.2 0.6 1.2 0.6 Z" fill="#607d8b"/><text x="7.3" y="9.6" font-size="9.5" font-weight="bold" fill="#d5dde1" text-anchor="middle" font-family="Liberation Sans">?</text></svg>
<div class="bx" style="left:187px;top:797px;width:1651px;height:1px;background:#343434"></div>
<div class="cb" style="left:192px;top:773px"></div>
<div class="t" style="left:218px;top:775px"><span class="lnk">Zabbix server</span></div>
<div class="t" style="left:406px;top:775px"><span class="lnk">CPU system time</span></div>
<div class="t" style="left:835px;top:775px">27s</div>
<div class="t" style="left:992px;top:775px">3.7769 %</div>
<div class="t" style="left:1148px;top:775px">+1.7058 %</div>
<div class="tag" style="left:1263px;top:773.5px">component: cpu</div>
<div class="t blue" style="left:1725px;top:775px">Graph</div>
<svg class="abs" style="left:505px;top:773px" width="15" height="15" viewBox="0 0 15 15"><path d="M1.2 0.6 H12.7 Q14.2 0.6 14.2 2.1 V10.4 Q14.2 11.8 12.7 11.8 H5 L0.2 14.9 V2.1 Q0.2 0.6 1.2 0.6 Z" fill="#607d8b"/><text x="7.3" y="9.6" font-size="9.5" font-weight="bold" fill="#d5dde1" text-anchor="middle" font-family="Liberation Sans">?</text></svg>
<div class="bx" style="left:187px;top:828px;width:1651px;height:1px;background:#343434"></div>
<div class="cb" style="left:192px;top:804px"></div>
<div class="t" style="left:218px;top:806px"><span class="lnk">Zabbix server</span></div>
<div class="t" style="left:406px;top:806px"><span class="lnk">CPU user time</span></div>
<div class="t" style="left:835px;top:806px">26s</div>
<div class="t" style="left:992px;top:806px">21.1284 %</div>
<div class="t" style="left:1148px;top:806px">+9.5505 %</div>
<div class="tag" style="left:1263px;top:804.5px">component: cpu</div>
<div class="t blue" style="left:1725px;top:806px">Graph</div>
<svg class="abs" style="left:491px;top:804px" width="15" height="15" viewBox="0 0 15 15"><path d="M1.2 0.6 H12.7 Q14.2 0.6 14.2 2.1 V10.4 Q14.2 11.8 12.7 11.8 H5 L0.2 14.9 V2.1 Q0.2 0.6 1.2 0.6 Z" fill="#607d8b"/><text x="7.3" y="9.6" font-size="9.5" font-weight="bold" fill="#d5dde1" text-anchor="middle" font-family="Liberation Sans">?</text></svg>
<div class="bx" style="left:187px;top:859px;width:1651px;height:1px;background:#343434"></div>
<div class="cb" style="left:192px;top:835px"></div>
<div class="t" style="left:218px;top:837px"><span class="lnk">Zabbix server</span></div>
<div class="t" style="left:406px;top:837px"><span class="lnk">CPU utilization</span></div>
<div class="t" style="left:835px;top:837px">52s</div>
<div class="t" style="left:992px;top:837px">37.0509 %</div>
<div class="t" style="left:1148px;top:837px">+33.6441 %</div>
<div class="tag" style="left:1263px;top:835.5px">component: cpu</div>
<div class="t blue" style="left:1725px;top:837px">Graph</div>
<svg class="abs" style="left:491px;top:835px" width="15" height="15" viewBox="0 0 15 15"><path d="M1.2 0.6 H12.7 Q14.2 0.6 14.2 2.1 V10.4 Q14.2 11.8 12.7 11.8 H5 L0.2 14.9 V2.1 Q0.2 0.6 1.2 0.6 Z" fill="#607d8b"/><text x="7.3" y="9.6" font-size="9.5" font-weight="bold" fill="#d5dde1" text-anchor="middle" font-family="Liberation Sans">?</text></svg>
<div class="bx" style="left:1798px;top:463px;width:16px;height:16px;background:#e45959;border-radius:2px"></div>
<div class="abs" style="left:1798px;top:463px;width:16px;height:16px;line-height:16px;text-align:center;color:#fff;font-weight:bold;font-style:italic;font-size:12px">i</div>
<div class="bx" style="left:535px;top:313px;width:5px;height:1px;background:#7a7a7a"></div><div class="bx" style="left:542px;top:313px;width:3px;height:1px;background:#7a7a7a"></div>
</div>
<div class="menu">
<div class="mh" style="top:11px">VIEW</div>
<div class="mit" style="top:35px">Latest data</div>
<div class="mit dis" style="top:59px">Graph</div>
<div class="mit" style="top:83px">Values</div>
<div class="bx" style="left:0;top:102px;width:213px;height:24px;background:#474747"></div>
<div class="mit" style="top:107px">500 latest values</div>
<div class="bx" style="left:0;top:131px;width:213px;height:1px;background:#383838"></div>
<div class="mh" style="top:142px">CONFIGURATION</div>
<div class="mit" style="top:166px">Item</div>
<div class="mit" style="top:190px">Triggers</div>
<div class="abs" style="left:197px;top:193px;width:0;height:0;border-left:6px solid #8a8a8a;border-top:4px solid transparent;border-bottom:4px solid transparent"></div>
<div class="mit" style="top:214px">Create trigger</div>
<div class="mit" style="top:238px">Create dependent item</div>
<div class="mit" style="top:262px">Create dependent discovery rule</div>
<div class="bx" style="left:0;top:285px;width:213px;height:1px;background:#383838"></div>
<div class="mh" style="top:297px">ACTIONS</div>
<div class="mit dis" style="top:321px">Execute now</div>
</div>
<div class="circ" style="left:343px;top:291px"><span>5</span></div>
<div class="circ" style="left:700px;top:402.5px"><span style="transform:scaleX(1)">6</span></div>
<div class="bx" style="left:0;top:0;width:1848px;height:3px;background:#fff;z-index:10"></div>
<div class="bx" style="left:0;top:851px;width:1848px;height:3px;background:#fff;z-index:10"></div>
</div></body></html>
